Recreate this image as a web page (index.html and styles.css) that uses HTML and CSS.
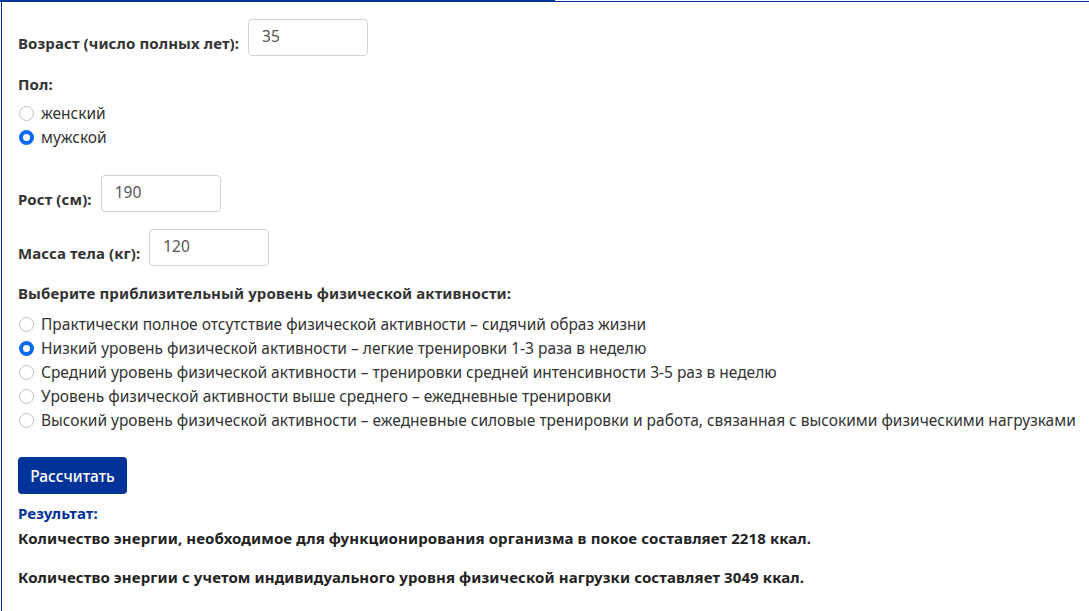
FILE: index.html
```html
<!DOCTYPE html>
<html lang="ru">
<head>
<meta charset="utf-8">
<title>Калькулятор</title>
<link rel="stylesheet" href="styles.css">
</head>
<body>
<div class="tabs">
  <div class="tab-active"></div>
  <div class="tab-rest"></div>
</div>
<div class="pane">
  <div class="field row-age">
    <label class="lbl">Возраст (число полных лет):</label>
    <input class="inp" type="text" value="35">
  </div>

  <div class="group row-sex">
    <div class="lbl">Пол:</div>
    <label class="radio"><input type="radio" name="sex"><span>женский</span></label>
    <label class="radio"><input type="radio" name="sex" checked><span>мужской</span></label>
  </div>

  <div class="field row-height">
    <label class="lbl">Рост (см):</label>
    <input class="inp" type="text" value="190">
  </div>

  <div class="field row-mass">
    <label class="lbl">Масса тела (кг):</label>
    <input class="inp" type="text" value="120">
  </div>

  <div class="group row-act">
    <div class="lbl">Выберите приблизительный уровень физической активности:</div>
    <label class="radio"><input type="radio" name="act"><span>Практически полное отсутствие физической активности – сидячий образ жизни</span></label>
    <label class="radio"><input type="radio" name="act" checked><span>Низкий уровень физической активности – легкие тренировки 1-3 раза в неделю</span></label>
    <label class="radio"><input type="radio" name="act"><span>Средний уровень физической активности – тренировки средней интенсивности 3-5 раз в неделю</span></label>
    <label class="radio"><input type="radio" name="act"><span>Уровень физической активности выше среднего – ежедневные тренировки</span></label>
    <label class="radio"><input type="radio" name="act"><span>Высокий уровень физической активности – ежедневные силовые тренировки и работа, связанная с высокими физическими нагрузками</span></label>
  </div>

  <button class="btn" type="button">Рассчитать</button>

  <div class="result">
    <div class="res-title">Результат:</div>
    <p class="res-line res-first">Количество энергии, необходимое для функционирования организма в покое составляет 2218 ккал.</p>
    <p class="res-line res-second">Количество энергии с учетом индивидуального уровня физической нагрузки составляет 3049 ккал.</p>
  </div>
</div>
</body>
</html>
```

FILE: styles.css
```css
* { box-sizing: border-box; }
html, body { margin: 0; padding: 0; background: #fff; }
body {
  font-family: "Noto Sans", "Open Sans", sans-serif;
  font-size: 15px;
  line-height: 24px;
  color: #333;
  width: 1089px;
  height: 611px;
  overflow: hidden;
}
.tabs { display: flex; height: 2px; }
.tab-active { width: 555px; height: 2px; background: #003399; }
.tab-rest { flex: 1; height: 2px; border-bottom: 1px solid #003399; }
.pane {
  margin-left: 1px;
  border-left: 1px solid #003399;
  height: 609px;
  padding: 17px 0 0 16px;
}
.lbl { font-weight: 700; color: #333; letter-spacing: 0.1px; }
.field { display: flex; align-items: flex-end; gap: 9px; }
.field .lbl { padding-bottom: 1px; }
.inp {
  width: 120px;
  height: 37px;
  border: 1px solid #ced4da;
  border-radius: 4px;
  padding: 0 13px 3px;
  font: inherit;
  font-size: 15.5px;
  color: #555;
  background: #fff;
}
.row-sex { margin-top: 16px; }
.row-sex .lbl { margin-bottom: 5px; }
.row-height { margin-top: 26px; }
.row-mass { margin-top: 17px; }
.row-act { margin-top: 15px; }
.row-act .lbl { margin-bottom: 7px; }
.radio { display: flex; align-items: center; gap: 7px; height: 24px; font-size: 15.5px; }
.radio input {
  appearance: none;
  -webkit-appearance: none;
  margin: 0 0 0 1px;
  width: 15px;
  height: 15px;
  border: 1px solid #c0c0c0;
  border-radius: 50%;
  background: #fff;
  flex: none;
}
.radio input:checked {
  border: 4px solid #0b6bf0;
  background: #fff;
}
.btn {
  display: block;
  margin-top: 25px;
  width: 109px;
  height: 37px;
  border: none;
  border-radius: 4px;
  background: #003399;
  color: #fff;
  font: inherit;
  font-size: 15.5px;
  font-weight: 500;
}
.result { margin-top: 7px; }
.res-title { color: #003399; font-weight: 700; letter-spacing: 0.1px; }
.res-line { margin: 0; font-weight: 700; color: #222; letter-spacing: 0.1px; }
.res-first { margin-top: 1px; }
.res-second { margin-top: 15px; }
```
